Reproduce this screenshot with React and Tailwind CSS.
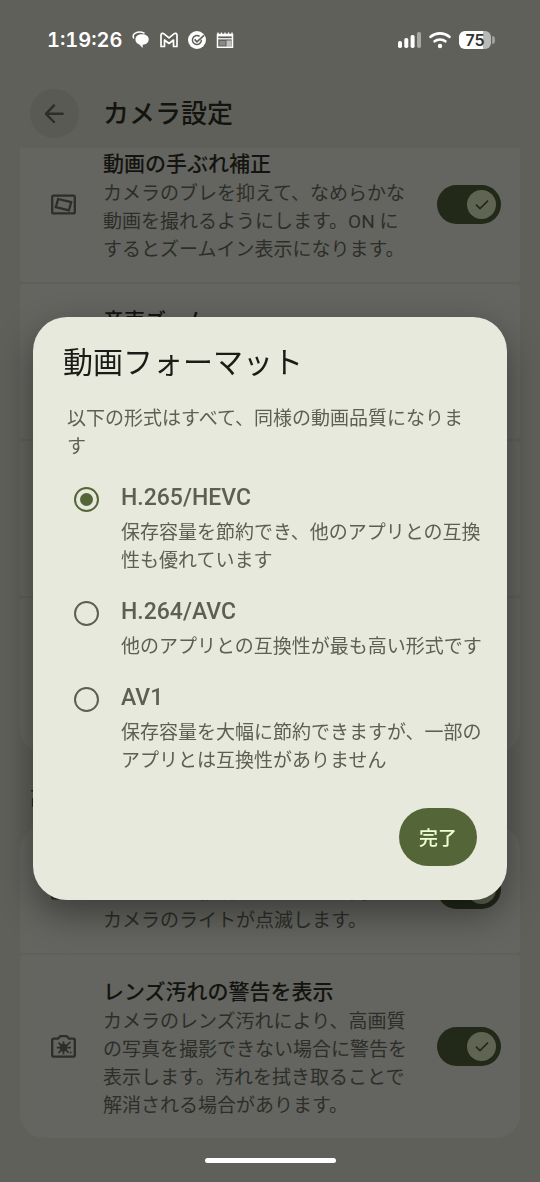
import { useState } from "react";

const settings = [
  {
    id: "stabilize",
    icon: "frame",
    title: "動画の手ぶれ補正",
    text: "カメラのブレを抑えて、なめらかな動画を撮れるようにします。ON にするとズームイン表示になります。",
  },
  { id: "audio-zoom", icon: "frame", title: "音声ズーム" },
  { id: "slot-3" },
  { id: "slot-4" },
];

const advanced = [
  {
    id: "timer-light",
    icon: "frame",
    title: "タイマーライト",
    text: "タイマーの秒読みをしている間は、カメラのライトが点滅します。",
  },
  {
    id: "lens",
    icon: "lens",
    title: "レンズ汚れの警告を表示",
    text: "カメラのレンズ汚れにより、高画質の写真を撮影できない場合に警告を表示します。汚れを拭き取ることで解消される場合があります。",
  },
];

const formats = [
  { id: "hevc", title: "H.265/HEVC", text: "保存容量を節約でき、他のアプリとの互換性も優れています" },
  { id: "avc", title: "H.264/AVC", text: "他のアプリとの互換性が最も高い形式です" },
  { id: "av1", title: "AV1", text: "保存容量を大幅に節約できますが、一部のアプリとは互換性がありません" },
];

function FrameIcon() {
  return (
    <svg viewBox="0 0 25 25" className="size-[25px] shrink-0" fill="none" stroke="currentColor" strokeWidth="2.3" strokeLinejoin="round" aria-hidden="true">
      <rect x="1.2" y="3.6" width="22.6" height="17.8" rx="1.4" />
      <path d="M7.2 7 20.2 10.2 17.9 18.4 4.8 15.2z" strokeLinejoin="miter" />
    </svg>
  );
}

function LensIcon() {
  return (
    <svg viewBox="0 0 25 25" className="size-[25px] shrink-0" fill="none" stroke="currentColor" aria-hidden="true">
      <path d="M2.4 4.6H7L9.2 2.2h6.6L18 4.6h4.6a1.2 1.2 0 0 1 1.2 1.2v15.6a1.2 1.2 0 0 1-1.2 1.2H2.4a1.2 1.2 0 0 1-1.2-1.2V5.8a1.2 1.2 0 0 1 1.2-1.2z" strokeWidth="2.3" strokeLinejoin="round" />
      <path d="M12.5 8.2v11.2M6.4 13.6h12.8M8 9.2l9 9M19 8.4l-11 10" strokeWidth="1.8" strokeLinecap="round" />
      <circle cx="12.4" cy="13.6" r="3.8" fill="currentColor" stroke="none" />
      <circle cx="19.6" cy="18.5" r="0.9" fill="currentColor" stroke="none" />
    </svg>
  );
}

function Toggle({ labelId }) {
  return (
    <span className="grid shrink-0">
      <input
        type="checkbox"
        role="switch"
        defaultChecked
        aria-labelledby={labelId}
        className="peer col-start-1 row-start-1 h-[39px] w-16 appearance-none rounded-full bg-[#646b5a] checked:bg-[#222919]"
      />
      <span className="pointer-events-none col-start-1 row-start-1 mr-[5px] flex size-[29px] items-center justify-center self-center justify-self-end rounded-full bg-[#606553] text-[#222919]">
        <svg viewBox="0 0 16 16" className="size-4" fill="none" stroke="currentColor" strokeWidth="1.6" aria-hidden="true">
          <path d="M2 7.6 6 11.6 14 3.6" />
        </svg>
      </span>
    </span>
  );
}

function Setting({ item }) {
  return (
    <li className="flex items-center rounded-sm bg-[#646560] pr-[19px] pl-[31px] text-[#2d2e29] first:rounded-t-3xl last:rounded-b-3xl">
      {item.icon === "lens" ? <LensIcon /> : <FrameIcon />}
      <div className="ml-[27px] min-w-0 flex-1 pt-[21px] pb-[18px]">
        <h3 id={item.id} className="text-[21px] leading-8 font-medium text-[#13140f]">
          {item.title}
        </h3>
        <p className={item.text ? "text-[19px] leading-7" : "min-h-21"}>{item.text}</p>
      </div>
      <div className="ml-6">
        <Toggle labelId={item.id} />
      </div>
    </li>
  );
}

function EmptySetting() {
  return <li aria-hidden="true" className="h-[155px] rounded-sm bg-[#646560] last:rounded-b-3xl" />;
}

function StatusBar() {
  return (
    <div className="flex h-20 items-center justify-between pr-[45px] pl-[47px] text-white">
      <div className="flex items-center gap-[10px]">
        <time className="font-[Inter,sans-serif] text-xl leading-6 font-semibold tabular-nums">1:19:26</time>
        <svg viewBox="0 0 18 18" className="size-[18px]" fill="currentColor" aria-hidden="true">
          <path d="M1.6 7C.7 5 1.4 3.2 3.3 2.2 5.2 1.2 9 .8 12 2" fill="none" stroke="currentColor" strokeWidth="1.5" strokeLinecap="round" />
          <path d="M10 3.3c4 0 6.700 2 6.700 5.100s-2.500 5-6 5.300L10.600 17 7.400 13.600C5 12.700 3.200 10.700 3.400 8.200c.2-2.900 2.900-4.900 6.600-4.900z" />
        </svg>
        <svg viewBox="0 0 18 18" className="size-[18px]" fill="none" stroke="currentColor" strokeWidth="1.7" strokeLinejoin="round" aria-hidden="true">
          <path d="M1 4.2C1 2.3 2.8 1.8 4 2.8l5 4 5-4c1.2-1 3-.5 3 1.4v11.3h-3.500V9L9 12.500 4.500 9v6.500H1z" />
        </svg>
        <svg viewBox="0 0 18 18" className="size-[18px]" fill="none" aria-hidden="true">
          <circle cx="9" cy="9" r="9" fill="currentColor" />
          <path d="M11.6 5.4A4.5 4.5 0 1 0 13.4 8.8" stroke="#5f605a" strokeWidth="1.5" />
          <path d="M6.6 8.4 9 10.8 16 4.4" stroke="#5f605a" strokeWidth="1.7" />
        </svg>
        <svg viewBox="0 0 18 18" className="size-[18px]" fill="none" stroke="currentColor" aria-hidden="true">
          <path d="M1.5 3.6h15v12.7h-15z" strokeWidth="1.5" />
          <path d="M1 4.2h16" strokeWidth="2.4" />
          <path d="M2 1.5v2M5.5 1.5v2M9 1.5v2M12.5 1.5v2M16 1.5v2" strokeWidth="1.3" />
          <path d="M1.5 7.8h15" strokeWidth="1.2" />
          <path d="M10.5 9.5h5v6h-5z" fill="currentColor" stroke="none" opacity=".6" />
          <path d="M3.5 10h6v4.5h-6z" fill="currentColor" stroke="none" opacity=".25" />
        </svg>
      </div>
      <div className="flex items-center gap-2">
        <svg viewBox="0 0 23 18" className="h-[18px] w-[23px]" fill="currentColor" aria-hidden="true">
          <rect x="0" y="10" width="4" height="7" rx="1.7" />
          <rect x="6.3" y="7" width="4" height="10" rx="1.7" />
          <rect x="12.6" y="4" width="4" height="13" rx="1.7" />
          <rect x="19" y="1" width="4" height="16" rx="1.7" opacity=".45" />
        </svg>
        <svg viewBox="0 0 22 18" className="h-[18px] w-[22px]" fill="none" stroke="currentColor" strokeWidth="2.6" strokeLinecap="round" aria-hidden="true">
          <path d="M1.6 5.8c5.4-4.6 13.4-4.6 18.8 0" />
          <path d="M5.6 10.3c3-2.5 7.8-2.5 10.8 0" />
          <circle cx="11" cy="15" r="2.2" fill="currentColor" stroke="none" />
        </svg>
        <div className="flex items-center gap-px">
          <span className="flex h-[18px] w-8 items-center justify-center rounded-md bg-linear-to-r from-white from-75% to-[#b9bab7] to-75% font-[Inter,sans-serif] text-base leading-none font-semibold text-[#30322d]">
            75
          </span>
          <span className="h-2 w-[3px] rounded-r-sm bg-[#9fa09c]" />
        </div>
      </div>
    </div>
  );
}

function FormatOption({ item, checked, onChange }) {
  return (
    <label className="flex">
      <span className="mt-1.5 mr-[22px] grid size-[25px] shrink-0">
        <input
          type="radio"
          name="format"
          value={item.id}
          checked={checked}
          onChange={onChange}
          aria-describedby={item.id + "-text"}
          className="peer col-start-1 row-start-1 size-[25px] appearance-none rounded-full border-2 border-[#5d5f50] checked:border-[#546638]"
        />
        <span className="pointer-events-none invisible col-start-1 row-start-1 size-[13px] self-center justify-self-center rounded-full bg-[#546638] peer-checked:visible" />
      </span>
      <span className="min-w-0 flex-1">
        <span className="block text-[23px] leading-[34px] font-medium">{item.title}</span>
        <span id={item.id + "-text"} className="mt-1 block text-[19px] leading-7">
          {item.text}
        </span>
      </span>
    </label>
  );
}

export default function App() {
  const [format, setFormat] = useState("hevc");
  return (
    <div lang="ja" className="flex min-h-screen flex-col bg-[#5f605a] font-[Roboto,'Noto_Sans_CJK_JP',sans-serif]">
      <StatusBar />
      <header className="flex items-center px-[30px] pt-[9px] pb-[10px]">
        <button type="button" aria-label="戻る" className="flex size-[49px] items-center justify-center rounded-full bg-[#595a54] text-[#2d2e29]">
          <svg viewBox="0 0 20 20" className="size-5" fill="none" stroke="currentColor" strokeWidth="2.4" strokeLinecap="round" strokeLinejoin="round" aria-hidden="true">
            <path d="M17.6 9.8H1M9 1.4 .9 9.8 9 18" />
          </svg>
        </button>
        <h1 className="ml-6 text-[26px] leading-9 font-medium text-[#13140f]">カメラ設定</h1>
      </header>

      <main className="overflow-hidden px-5">
        <ul className="-mt-[21px] flex flex-col gap-0.5">
          {settings.map((item) => (item.title ? <Setting key={item.id} item={item} /> : <EmptySetting key={item.id} />))}
        </ul>
        <h2 className="px-[10px] pt-8 pb-[13px] text-[19px] leading-7 font-medium text-[#1d2312]">高度な設定</h2>
        <ul className="flex flex-col gap-0.5">
          {advanced.map((item) => (
            <Setting key={item.id} item={item} />
          ))}
        </ul>
      </main>
      <div className="flex justify-center py-5">
        <span className="h-[5px] w-[131px] rounded-full bg-white" />
      </div>

      <div className="fixed inset-0 flex items-center justify-center px-[33px] pt-[35px]">
        <section
          role="dialog"
          aria-modal="true"
          aria-labelledby="dialog-title"
          className="w-full max-w-lg rounded-[34px] bg-[#e6e9db] px-[30px] pt-[26px] pb-[34px] text-[#5d5f50] shadow-[0_14px_36px_rgba(0,0,0,0.4)]"
        >
          <h2 id="dialog-title" className="text-[30px] leading-10 text-[#1a1c16]">
            動画フォーマット
          </h2>
          <p className="mt-[22px] px-1 text-[19px] leading-7">以下の形式はすべて、同様の動画品質になります</p>
          <form className="mt-5 -mr-2 flex flex-col gap-5 pl-[11px]">
            {formats.map((item) => (
              <FormatOption key={item.id} item={item} checked={format === item.id} onChange={() => setFormat(item.id)} />
            ))}
          </form>
          <div className="mt-[33px] flex justify-end">
            <button type="button" className="h-[58px] rounded-full bg-[#546638] px-5 pt-1 text-[19px] font-medium text-[#efffd0]">
              完了
            </button>
          </div>
        </section>
      </div>
    </div>
  );
}
